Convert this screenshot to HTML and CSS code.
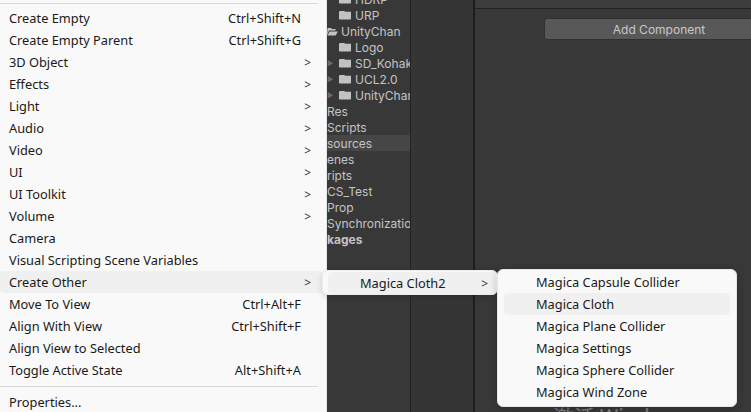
FILE: index.html
```html
<!DOCTYPE html>
<html>
<head>
<meta charset="utf-8">
<link rel="stylesheet" href="styles.css">
</head>
<body>
<div class="app">
  <div class="tree">
    <div class="row l2"><span class="fold"></span>HDRP</div>
    <div class="row l2"><span class="fold"></span>URP</div>
    <div class="row l1"><svg class="open" width="11" height="9" viewBox="0 0 11 9"><path d="M0.5 1 h3.5 l1 1 h3.5 v1.6 h-6.5 l-2 4.9 z M2.6 4.4 h8.2 l-2.1 4.1 h-8.2 z" fill="#c2c2c2"/></svg>UnityChan</div>
    <div class="row l2"><span class="fold"></span>Logo</div>
    <div class="row l2"><span class="arr">&#9654;</span><span class="fold"></span>SD_Kohaku</div>
    <div class="row l2"><span class="arr">&#9654;</span><span class="fold"></span>UCL2.0</div>
    <div class="row l2"><span class="arr">&#9654;</span><span class="fold"></span>UnityChan</div>
    <div class="row">Res</div>
    <div class="row">Scripts</div>
    <div class="row sel">sources</div>
    <div class="row">enes</div>
    <div class="row">ripts</div>
    <div class="row">CS_Test</div>
    <div class="row">Prop</div>
    <div class="row">Synchronization</div>
    <div class="row bold">kages</div>
  </div>
  <div class="vline"></div>
  <div class="mid"></div>
  <div class="vline thick"></div>
  <div class="inspector">
    <div class="insp-top"></div>
    <div class="insp-body">
      <div class="addbtn">Add Component</div>
    </div>
  </div>
</div>

<div class="watermark">激活 Windows</div>

<div class="menu main">
  <div class="sep top"></div>
  <div class="item"><span class="lbl">Create Empty</span><span class="key">Ctrl+Shift+N</span></div>
  <div class="item"><span class="lbl">Create Empty Parent</span><span class="key">Ctrl+Shift+G</span></div>
  <div class="item"><span class="lbl">3D Object</span><span class="chev">&gt;</span></div>
  <div class="item"><span class="lbl">Effects</span><span class="chev">&gt;</span></div>
  <div class="item"><span class="lbl">Light</span><span class="chev">&gt;</span></div>
  <div class="item"><span class="lbl">Audio</span><span class="chev">&gt;</span></div>
  <div class="item"><span class="lbl">Video</span><span class="chev">&gt;</span></div>
  <div class="item"><span class="lbl">UI</span><span class="chev">&gt;</span></div>
  <div class="item"><span class="lbl">UI Toolkit</span><span class="chev">&gt;</span></div>
  <div class="item"><span class="lbl">Volume</span><span class="chev">&gt;</span></div>
  <div class="item"><span class="lbl">Camera</span></div>
  <div class="item"><span class="lbl">Visual Scripting Scene Variables</span></div>
  <div class="item hot"><span class="lbl">Create Other</span><span class="chev">&gt;</span></div>
  <div class="item"><span class="lbl">Move To View</span><span class="key">Ctrl+Alt+F</span></div>
  <div class="item"><span class="lbl">Align With View</span><span class="key">Ctrl+Shift+F</span></div>
  <div class="item"><span class="lbl">Align View to Selected</span></div>
  <div class="item"><span class="lbl">Toggle Active State</span><span class="key">Alt+Shift+A</span></div>
  <div class="sep"></div>
  <div class="item"><span class="lbl">Properties...</span></div>
</div>

<div class="menu sub1">
  <div class="item hot"><span class="lbl">Magica Cloth2</span><span class="chev">&gt;</span></div>
</div>

<div class="menu sub2">
  <div class="item"><span class="lbl">Magica Capsule Collider</span></div>
  <div class="item hot"><span class="lbl">Magica Cloth</span></div>
  <div class="item"><span class="lbl">Magica Plane Collider</span></div>
  <div class="item"><span class="lbl">Magica Settings</span></div>
  <div class="item"><span class="lbl">Magica Sphere Collider</span></div>
  <div class="item"><span class="lbl">Magica Wind Zone</span></div>
</div>
</body>
</html>
```
FILE: styles.css
```css
html, body {
  margin: 0;
  padding: 0;
}
body {
  width: 751px;
  height: 412px;
  overflow: hidden;
  position: relative;
  background: #383838;
}
.app {
  display: flex;
  height: 412px;
  overflow: hidden;
}
.tree {
  flex: 0 0 410px;
  box-sizing: border-box;
  padding-left: 327px;
  margin-top: -9px;
  background: #383838;
  overflow: hidden;
  font-family: Inter, "Liberation Sans", sans-serif;
  font-size: 12px;
  color: #c4c4c4;
}
.row {
  height: 16px;
  display: flex;
  align-items: center;
  white-space: nowrap;
  position: relative;
}
.row.l2 { padding-left: 12px; }
.row.sel { background: #464646; }
.row.bold { font-weight: bold; }
.fold {
  flex: 0 0 12px;
  height: 9px;
  margin-right: 4px;
  background: #c2c2c2;
  border-radius: 1px;
  clip-path: polygon(0 0, 40% 0, 50% 15%, 100% 15%, 100% 100%, 0 100%);
}
.open {
  flex: 0 0 auto;
  margin-right: 3px;
}
.arr {
  position: absolute;
  left: 0;
  font-size: 7px;
  color: #6a6a6a;
}
.vline {
  flex: 0 0 1px;
  background: #232323;
}
.vline.thick { flex-basis: 2px; background: #1e1e1e; }
.mid {
  flex: 0 0 62px;
  background: #353535;
}
.inspector {
  flex: 1 1 0;
  min-width: 0;
  overflow: hidden;
  display: flex;
  flex-direction: column;
  background: #383838;
}
.insp-top {
  height: 8px;
  background: #3c3c3c;
  border-bottom: 1px solid #232323;
}
.insp-body {
  padding: 9px 0 0 69px;
}
.addbtn {
  width: 228px;
  height: 20px;
  border: 1px solid #303030;
  border-radius: 3px;
  background: #585858;
  color: #c8c8c8;
  font-family: Inter, "Liberation Sans", sans-serif;
  font-size: 12px;
  display: flex;
  align-items: center;
  justify-content: center;
}
.watermark {
  position: absolute;
  left: 553px;
  top: 406px;
  font-family: "Noto Sans CJK SC", "Noto Sans", sans-serif;
  font-size: 21px;
  line-height: 1;
  color: rgba(255, 255, 255, 0.35);
  white-space: nowrap;
}
.menu {
  position: absolute;
  font-family: "Noto Sans", "Noto Sans CJK SC", sans-serif;
  font-size: 12.8px;
  color: #1a1a1a;
  background: #f9f9f9;
  box-sizing: border-box;
  overflow: hidden;
}
.main {
  left: 0;
  top: 0;
  width: 327px;
  height: 412px;
  padding-top: 3px;
  border-right: 1px solid #e6e6e6;
}
.sep {
  height: 1px;
  background: #d8d8d8;
  margin: 5px 8px 4px 0;
}
.sep.top {
  margin: 0 8px 3px 0;
}
.item {
  height: 22px;
  display: flex;
  align-items: center;
  white-space: nowrap;
  border-radius: 4px;
}
.main .item {
  margin-right: 4px;
  padding-left: 9px;
}
.item.hot { background: #f0f0f0; }
.lbl { flex: 1; }
.key { margin-right: 21px; }
.chev {
  margin-right: 11px;
  font-size: 12px;
  color: #333;
}
.sub1 {
  left: 322px;
  top: 270px;
  width: 176px;
  height: 25px;
  padding: 1px 1px 1px 5px;
  border-radius: 6px;
  border: 1px solid #ececec;
  box-shadow: 0 2px 6px rgba(0,0,0,0.15);
}
.sub1 .item { padding-left: 32px; }
.sub1 .chev { margin-right: 8px; }
.sub2 {
  left: 497px;
  top: 269px;
  width: 240px;
  height: 138px;
  padding: 1px 6px;
  border-radius: 6px;
  border: 1px solid #e6e6e6;
  box-shadow: 0 2px 8px rgba(0,0,0,0.2);
}
.sub2 .item { padding-left: 32px; }
```
